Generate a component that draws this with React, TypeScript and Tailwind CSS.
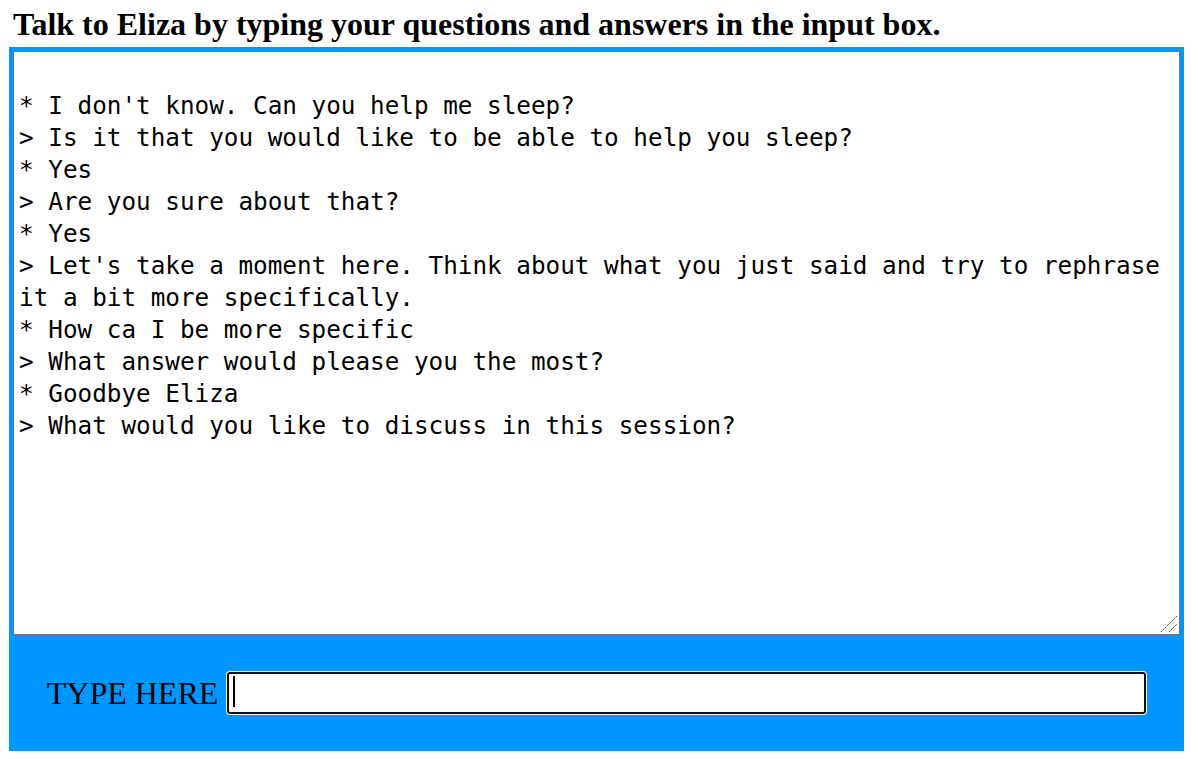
import React from "react";

const log = `
* I don't know. Can you help me sleep?
> Is it that you would like to be able to help you sleep?
* Yes
> Are you sure about that?
* Yes
> Let's take a moment here. Think about what you just said and try to rephrase it a bit more specifically.
* How ca I be more specific
> What answer would please you the most?
* Goodbye Eliza
> What would you like to discuss in this session?`;

export default function App() {
  return (
    <div className="w-[1198px] h-[759px] bg-white overflow-hidden">
      <h3
        className="pl-[13px] pt-[8px] mb-[7px] text-[32px] leading-[32px] font-bold text-black whitespace-nowrap"
        style={{ fontFamily: '"Liberation Serif", "Times New Roman", serif' }}
      >
        Talk to Eliza by typing your questions and answers in the input box.
      </h3>
      <div className="ml-[9px] w-[1175px] h-[704px] bg-[#0096ff] p-[4px] flex flex-col">
        <div className="relative w-[1167px] h-[584px] shrink-0">
          <textarea
            readOnly
            value={log}
            className="block w-full h-full bg-white border border-[#767676] pt-[6px] pb-[4px] px-[5px] text-[24.3px] leading-[32px] text-black outline-none resize-none overflow-hidden"
            style={{ fontFamily: '"DejaVu Sans Mono", "Liberation Mono", monospace' }}
          />
          <svg
            className="absolute right-[2px] bottom-[2px]"
            width="18"
            height="18"
            viewBox="0 0 18 18"
          >
            <line x1="1" y1="17" x2="17" y2="1" stroke="#5a5a5a" strokeWidth="1" strokeDasharray="2 0.6" />
            <line x1="9" y1="17" x2="17" y2="9" stroke="#5a5a5a" strokeWidth="1" strokeDasharray="2 0.6" />
          </svg>
        </div>
        <div className="flex-1 flex items-center justify-center gap-[8px] pt-[4px] pl-[1px]">
          <span
            className="text-[32px] leading-none text-black"
            style={{ fontFamily: '"Liberation Serif", "Times New Roman", serif' }}
          >
            TYPE HERE
          </span>
          <div className="relative w-[921px] h-[44px] rounded-[4px] bg-white p-[1px]">
            <div className="w-full h-full rounded-[3px] border-2 border-[#101010] bg-white" />
            <span className="absolute left-[7px] top-[5px] w-[2px] h-[31px] bg-black" />
          </div>
        </div>
      </div>
    </div>
  );
}
